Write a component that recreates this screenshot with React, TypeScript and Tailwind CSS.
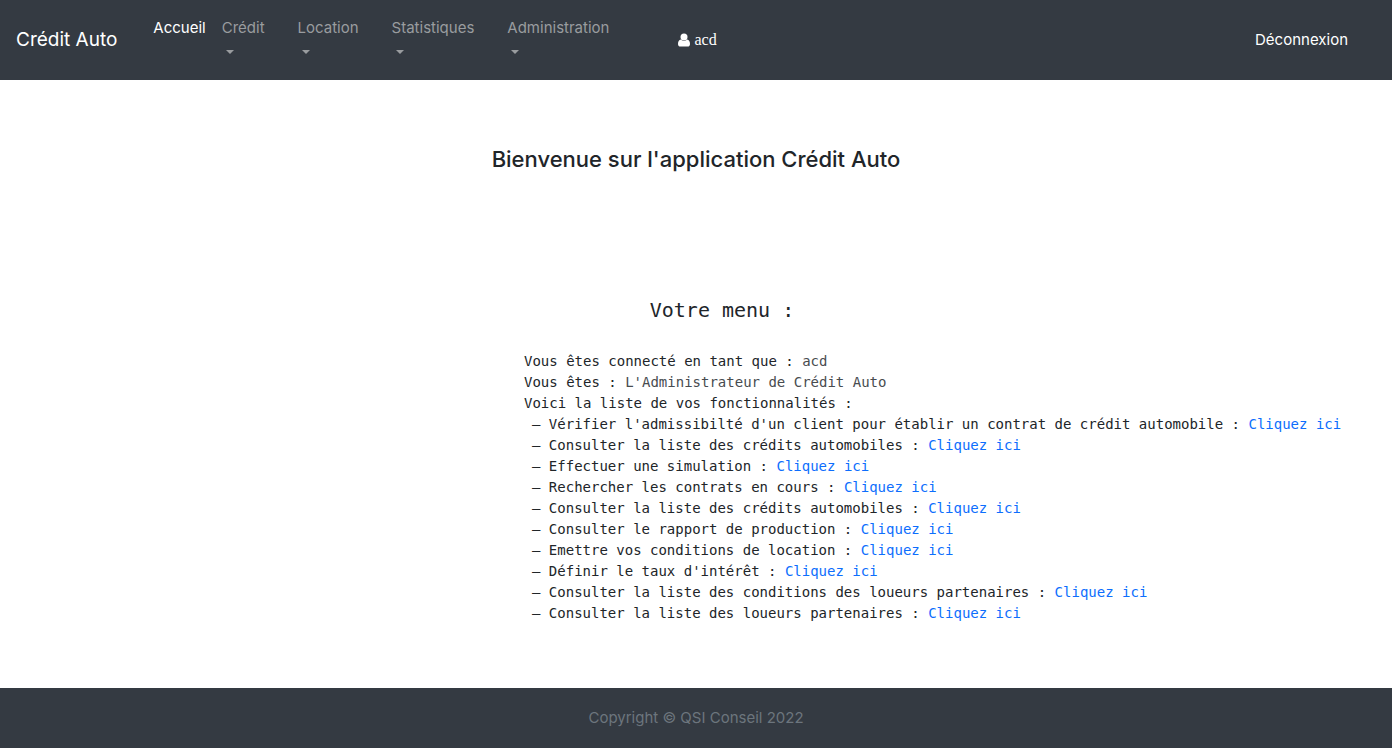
import type { ReactNode } from "react";

const menus = ["Crédit", "Location", "Statistiques", "Administration"];

const features = [
  "Vérifier l'admissibilté d'un client pour établir un contrat de crédit automobile",
  "Consulter la liste des crédits automobiles",
  "Effectuer une simulation",
  "Rechercher les contrats en cours",
  "Consulter la liste des crédits automobiles",
  "Consulter le rapport de production",
  "Emettre vos conditions de location",
  "Définir le taux d'intérêt",
  "Consulter la liste des conditions des loueurs partenaires",
  "Consulter la liste des loueurs partenaires",
];

function Navbar() {
  return (
    <header className="flex items-center bg-[#343a42] px-4 py-2 text-white">
      <a href="#" className="text-[19px]">
        Crédit Auto
      </a>
      <nav className="ml-7 flex items-start">
        <a href="#" className="p-2 leading-6">
          Accueil
        </a>
        {menus.map((menu) => (
          <button
            key={menu}
            type="button"
            className="mr-[17px] flex flex-col items-start p-2 leading-6 text-[#999c9f]"
          >
            {menu}
            <span className="ml-1 flex h-6 items-center">
              <svg width="8" height="4" viewBox="0 0 8 4" fill="currentColor" aria-hidden="true">
                <path d="M0 0h8L4 4z" />
              </svg>
            </span>
          </button>
        ))}
      </nav>
      <a
        href="#"
        className="ml-11 flex items-center gap-1 font-['Liberation_Serif',serif] text-base leading-6"
      >
        <svg width="12" height="14" viewBox="0 0 12 14" fill="currentColor" aria-hidden="true">
          <circle cx="6" cy="4" r="3.5" />
          <path d="M2.8 6.6C1 6.8 0 8.7 0 11c0 1.6 1 2.6 2.4 2.6h7.2C11 13.6 12 12.6 12 11c0-2.300-1-4.200-2.800-4.400C8.300 7.500 7.200 8 6 8s-2.300-.5-3.200-1.400z" />
        </svg>
        acd
      </a>
      <a href="#" className="mr-7 ml-auto">
        Déconnexion
      </a>
    </header>
  );
}

function Identity({ children }: { children: ReactNode }) {
  return <span className="text-[#484c50]">{children}</span>;
}

export default function App() {
  return (
    <div className="flex min-h-screen flex-col bg-white font-['Inter',sans-serif] text-[15px] text-[#212529]">
      <Navbar />
      <main className="grow">
        <h1 className="pt-16 text-center text-[22px] leading-[30px] font-medium">
          Bienvenue sur l'application Crédit Auto
        </h1>
        <section className="pt-31 font-['DejaVu_Sans_Mono',monospace]">
          <h2 className="ml-13 text-center text-xl leading-6">Votre menu :</h2>
          <div className="mt-7 flex">
            <div className="w-3/8 shrink-0" />
            <div className="pl-0.5 pt-px pb-8 text-sm leading-[21px] whitespace-nowrap">
              <p>
                Vous êtes connecté en tant que : <Identity>acd</Identity>
              </p>
              <p>
                Vous êtes : <Identity>L'Administrateur de Crédit Auto</Identity>
              </p>
              <p>Voici la liste de vos fonctionnalités :</p>
              <ul className="pl-2">
                {features.map((feature, index) => (
                  <li key={index}>
                    – {feature} :{" "}
                    <a href="#" className="text-[#0d6efd]">
                      Cliquez ici
                    </a>
                  </li>
                ))}
              </ul>
            </div>
          </div>
        </section>
      </main>
      <footer className="bg-[#343a42] py-[18px] text-center leading-6 text-[#6c757d]">
        Copyright © QSI Conseil 2022
      </footer>
    </div>
  );
}
